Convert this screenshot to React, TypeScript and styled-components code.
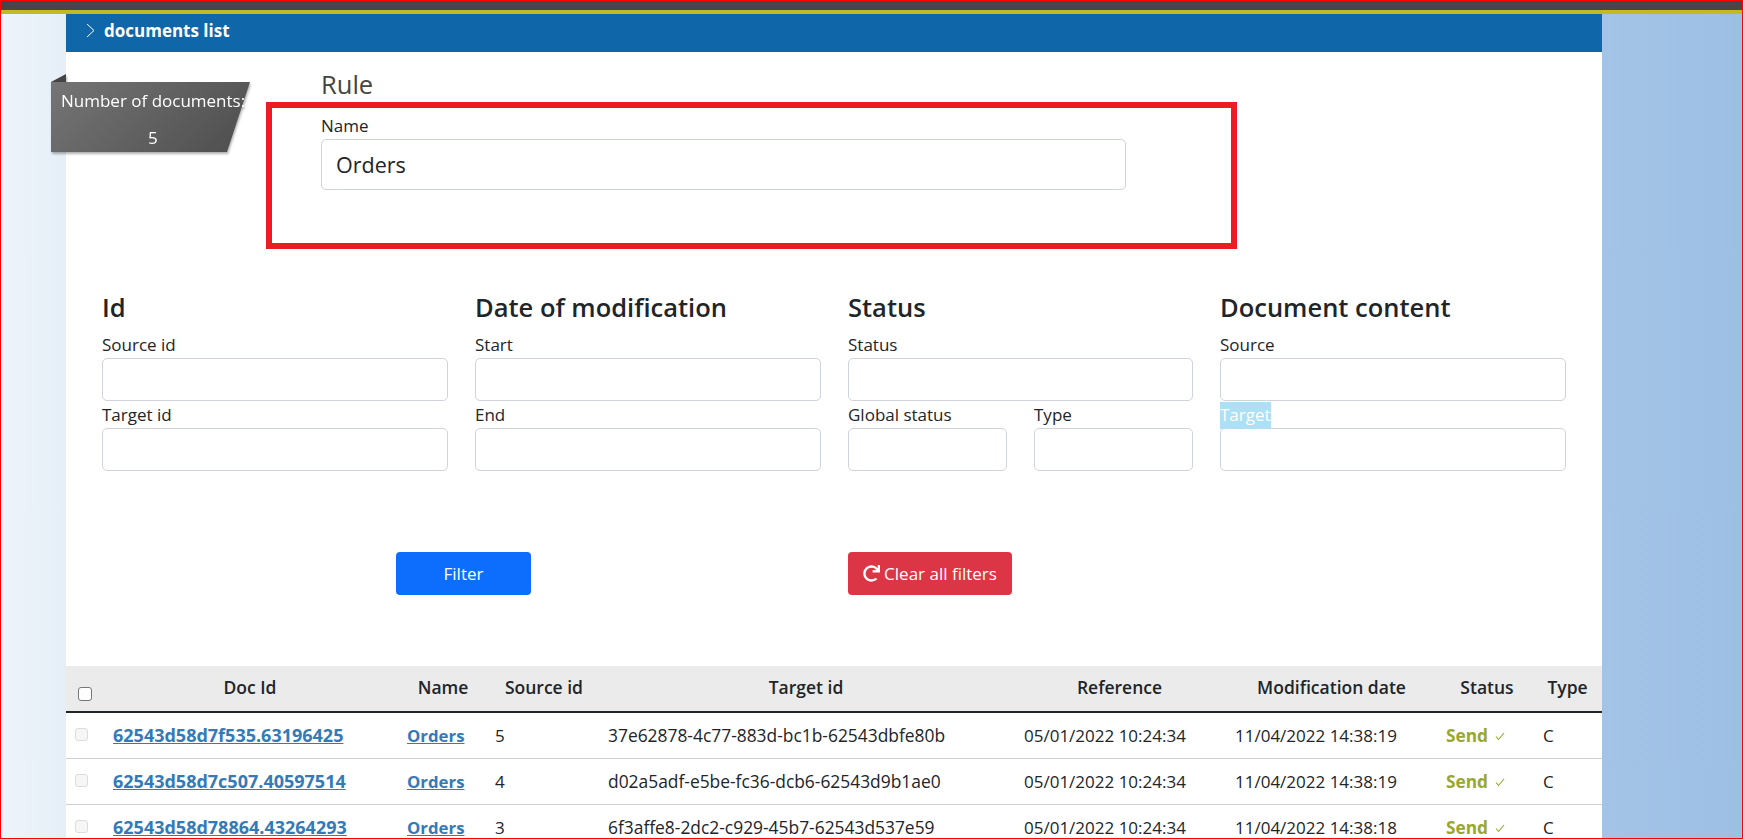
import styled, { createGlobalStyle } from "styled-components";
import { FaRedo } from "react-icons/fa";

const GlobalStyle = createGlobalStyle`
  html, body {
    margin: 0;
    padding: 0;
    background: #fff;
  }
  * {
    box-sizing: border-box;
  }
  body {
    font-family: "Open Sans", "Noto Sans", sans-serif;
    font-size: 17px;
    color: #212529;
  }
`;

const Frame = styled.div`
  width: 1743px;
  height: 839px;
  border: 1px solid #ff0000;
  overflow: hidden;
  display: flex;
  flex-direction: column;
`;

const TopBar = styled.div`
  flex: none;
  height: 13px;
  background: #464547;
  border-bottom: 4px solid #c2b924;
`;

const Body = styled.div`
  flex: 1;
  display: grid;
  grid-template-columns: 65px 1536px 140px;
  min-height: 0;
`;

const LeftGutter = styled.div`
  background: linear-gradient(to right, #edf4fb, #e6eef7);
`;

const RightGutter = styled.div`
  background: linear-gradient(to right, #a3c4e7, #9dbfe3);
`;

const Main = styled.main`
  position: relative;
  background: #fff;
  min-width: 0;
`;

const TitleBar = styled.div`
  height: 38px;
  background: #0f67aa;
  color: #fff;
  display: flex;
  align-items: center;
  gap: 9px;
  padding: 0 0 6px 20px;
  font-size: 17px;
  font-weight: 700;
  svg {
    display: block;
  }
`;

const Badge = styled.div`
  position: absolute;
  left: -15px;
  top: 60px;
  width: 199px;
  height: 80px;
  color: #fff;
  font-size: 17px;
  filter: drop-shadow(1px 2px 1px rgba(0, 0, 0, 0.3));
`;

const BadgeFold = styled.div`
  position: absolute;
  left: 0;
  top: 0;
  width: 15px;
  height: 8px;
  background: #444;
  clip-path: polygon(0 100%, 100% 0, 100% 100%);
`;

const BadgeBody = styled.div`
  position: absolute;
  left: 0;
  top: 8px;
  width: 199px;
  height: 70px;
  background: linear-gradient(135deg, #757575, #4d4d4d);
  clip-path: polygon(0 0, 100% 0, 176px 100%, 0 100%);
`;

const BadgeText = styled.div`
  position: absolute;
  left: 10px;
  white-space: nowrap;
  top: ${(props: { $top: number }) => props.$top}px;
`;

const BadgeCount = styled(BadgeText)`
  left: 97px;
`;

const RuleSection = styled.section`
  padding: 18px 0 0 255px;
  height: 241px;
`;

const RuleTitle = styled.h3`
  margin: 0 0 16px;
  font-size: 25.5px;
  font-weight: 400;
  line-height: 28px;
  color: #444;
`;

const Label = styled.label`
  display: block;
  font-size: 17px;
  line-height: 26px;
  height: 26px;
  white-space: nowrap;
  overflow: visible;
`;

const RuleLabel = styled(Label)`
  height: 25px;
  line-height: 24px;
`;

const NameInput = styled.input`
  display: block;
  width: 805px;
  height: 51px;
  padding: 0 14px 1px;
  font: inherit;
  font-size: 21.5px;
  color: #212529;
  border: 1px solid #ced4da;
  border-radius: 5px;
  background: #fff;
`;

const Highlight = styled.div`
  position: absolute;
  left: 200px;
  top: 88px;
  width: 971px;
  height: 147px;
  border: 6px solid #ed1c24;
  pointer-events: none;
`;

const Filters = styled.section`
  display: grid;
  grid-template-columns: 346px 346px 345px 346px;
  column-gap: 27px;
  padding-left: 36px;
`;

const FilterColumn = styled.div`
  min-width: 0;
`;

const FilterTitle = styled.h4`
  margin: -1px 0 10px;
  font-size: 25.5px;
  font-weight: 600;
  line-height: 30px;
  white-space: nowrap;
`;

const Field = styled.input`
  display: block;
  width: 100%;
  height: 43px;
  margin-bottom: 1px;
  border: 1px solid #ced4da;
  border-radius: 5px;
  background: #fff;
`;

const FieldPair = styled.div`
  display: grid;
  grid-template-columns: 159px 159px;
  column-gap: 27px;
`;

const SelectedLabel = styled(Label)`
  span {
    display: inline-block;
    height: 27px;
    background: #addff5;
    color: #fff;
  }
`;

const Actions = styled.div`
  display: flex;
  padding: 80px 0 0 330px;
  height: 194px;
`;

const FilterButton = styled.button`
  width: 135px;
  height: 43px;
  border: 0;
  border-radius: 4px;
  background: #0d6efd;
  color: #fff;
  font: inherit;
  font-size: 17px;
`;

const ClearButton = styled.button`
  margin-left: 317px;
  width: 164px;
  height: 43px;
  border: 0;
  border-radius: 4px;
  background: #dc3545;
  color: #fff;
  font: inherit;
  font-size: 17px;
  display: flex;
  align-items: center;
  justify-content: center;
  gap: 4px;
  white-space: nowrap;
`;

const Table = styled.table`
  width: 1536px;
  table-layout: fixed;
  border-collapse: collapse;
`;

const HeadRow = styled.tr`
  height: 46px;
  background: #ebebeb;
  border-bottom: 2px solid #212529;
`;

const Th = styled.th<{ $left?: number; $right?: number }>`
  padding: 0 ${(props) => props.$right ?? 0}px 4px ${(props) => props.$left ?? 0}px;
  font-size: 17.5px;
  font-weight: 600;
  text-align: center;
  white-space: nowrap;
  color: #212529;
`;

const Row = styled.tr`
  height: 46px;
  border-bottom: 1px solid #cfcfcf;
`;

const Td = styled.td`
  padding: 0 0 0 10px;
  font-size: 17px;
  white-space: nowrap;
`;

const TargetTd = styled(Td)`
  font-size: 17.4px;
`;

const CheckCell = styled.td`
  padding: 0 0 2px 9px;
`;

const HeadCheckCell = styled.th`
  padding: 10px 0 0 12px;
  text-align: left;
`;

const HeadCheck = styled.input`
  display: block;
  appearance: none;
  margin: 0;
  width: 14px;
  height: 14px;
  background: #fff;
  border: 1px solid #767676;
  border-radius: 3px;
`;

const RowCheck = styled.input`
  display: block;
  appearance: none;
  margin: 0;
  width: 13px;
  height: 13px;
  background: #f6f6f6;
  border: 1px solid #dcdcdc;
  border-radius: 3px;
`;

const DocLink = styled.a`
  color: #337ab7;
  font-weight: 700;
  text-decoration: underline;
  font-size: ${(props: { $size: number }) => props.$size}px;
`;

const StatusText = styled.span`
  display: inline-flex;
  align-items: center;
  gap: 7px;
  color: #98a82f;
  font-weight: 700;
  font-size: 17.3px;
  svg {
    display: block;
    margin-top: 3px;
  }
`;

const rows = [
  { id: "62543d58d7f535.63196425", source: "5", target: "37e62878-4c77-883d-bc1b-62543dbfe80b", mod: "11/04/2022 14:38:19" },
  { id: "62543d58d7c507.40597514", source: "4", target: "d02a5adf-e5be-fc36-dcb6-62543d9b1ae0", mod: "11/04/2022 14:38:19" },
  { id: "62543d58d78864.43264293", source: "3", target: "6f3affe8-2dc2-c929-45b7-62543d537e59", mod: "11/04/2022 14:38:18" },
];

const colWidths = [37, 294, 88, 113, 416, 211, 211, 97, 69];

export default function App() {
  return (
    <>
      <GlobalStyle />
      <Frame>
        <TopBar />
        <Body>
          <LeftGutter />
          <Main>
            <TitleBar>
              <svg width="9" height="15" viewBox="0 0 9 15" fill="none" stroke="#fff" strokeWidth="1">
                <path d="M1 1l7 6.5L1 14" />
              </svg>
              documents list
            </TitleBar>
            <Badge>
              <BadgeFold />
              <BadgeBody />
              <BadgeText $top={15}>Number of documents:</BadgeText>
              <BadgeCount $top={52}>5</BadgeCount>
            </Badge>
            <RuleSection>
              <RuleTitle>Rule</RuleTitle>
              <RuleLabel>Name</RuleLabel>
              <NameInput readOnly value="Orders" />
            </RuleSection>
            <Highlight />
            <Filters>
              <FilterColumn>
                <FilterTitle>Id</FilterTitle>
                <Label>Source id</Label>
                <Field />
                <Label>Target id</Label>
                <Field />
              </FilterColumn>
              <FilterColumn>
                <FilterTitle>Date of modification</FilterTitle>
                <Label>Start</Label>
                <Field />
                <Label>End</Label>
                <Field />
              </FilterColumn>
              <FilterColumn>
                <FilterTitle>Status</FilterTitle>
                <Label>Status</Label>
                <Field />
                <FieldPair>
                  <div>
                    <Label>Global status</Label>
                    <Field />
                  </div>
                  <div>
                    <Label>Type</Label>
                    <Field />
                  </div>
                </FieldPair>
              </FilterColumn>
              <FilterColumn>
                <FilterTitle>Document content</FilterTitle>
                <Label>Source</Label>
                <Field />
                <SelectedLabel>
                  <span>Target</span>
                </SelectedLabel>
                <Field />
              </FilterColumn>
            </Filters>
            <Actions>
              <FilterButton>Filter</FilterButton>
              <ClearButton>
                <FaRedo size={17} />
                Clear all filters
              </ClearButton>
            </Actions>
            <Table>
              <colgroup>
                {colWidths.map((w, i) => (
                  <col key={i} width={w} />
                ))}
              </colgroup>
              <thead>
                <HeadRow>
                  <HeadCheckCell>
                    <HeadCheck type="checkbox" />
                  </HeadCheckCell>
                  <Th>Doc Id</Th>
                  <Th $left={4}>Name</Th>
                  <Th $left={5}>Source id</Th>
                  <Th>Target id</Th>
                  <Th>Reference</Th>
                  <Th $left={2}>Modification date</Th>
                  <Th $left={5}>Status</Th>
                  <Th>Type</Th>
                </HeadRow>
              </thead>
              <tbody>
                {rows.map((row) => (
                  <Row key={row.id}>
                    <CheckCell>
                      <RowCheck type="checkbox" disabled />
                    </CheckCell>
                    <Td>
                      <DocLink href="#" $size={18}>{row.id}</DocLink>
                    </Td>
                    <Td>
                      <DocLink href="#" $size={16.8}>Orders</DocLink>
                    </Td>
                    <Td>{row.source}</Td>
                    <TargetTd>{row.target}</TargetTd>
                    <Td>05/01/2022 10:24:34</Td>
                    <Td>{row.mod}</Td>
                    <Td>
                      <StatusText>
                        Send
                        <svg width="10" height="9" viewBox="0 0 10 9" fill="none" stroke="#98a82f" strokeWidth="1.1">
                          <path d="M1 4.5l2.5 3L9 1" />
                        </svg>
                      </StatusText>
                    </Td>
                    <Td>C</Td>
                  </Row>
                ))}
              </tbody>
            </Table>
          </Main>
          <RightGutter />
        </Body>
      </Frame>
    </>
  );
}
